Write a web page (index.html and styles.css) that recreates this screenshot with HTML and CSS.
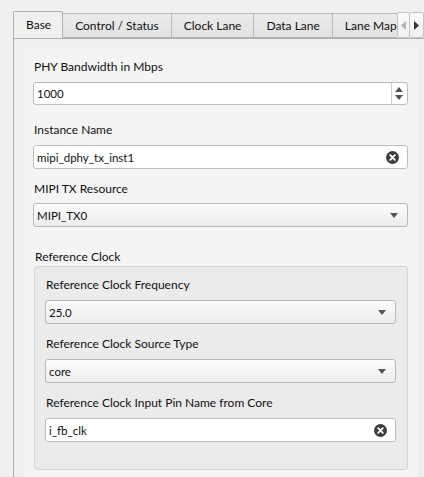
FILE: index.html
```html
<!DOCTYPE html>
<html>
<head>
<meta charset="utf-8">
<link rel="stylesheet" href="styles.css">
</head>
<body>
<div class="tabwidget">
  <div class="tabbar">
    <div class="tabs">
      <div class="tab selected">Base</div>
      <div class="tab">Control / Status</div>
      <div class="tab">Clock Lane</div>
      <div class="tab">Data Lane</div>
      <div class="tab">Lane Mapping</div>
    </div>
    <div class="scrollbtns">
      <div class="sbtn"><svg width="6" height="9" viewBox="0 0 6 9"><path d="M5 0 L0 4.5 L5 9 Z" fill="#b4b4b4"/></svg></div>
      <div class="sbtn"><svg width="6" height="9" viewBox="0 0 6 9"><path d="M0 0 L5 4.5 L0 9 Z" fill="#333"/></svg></div>
    </div>
  </div>
  <div class="pane">
    <div class="scrollarea">
      <div class="field first">
        <div class="label">PHY Bandwidth in Mbps</div>
        <div class="input spin">
          <span class="value">1000</span>
          <span class="spinbtns">
            <svg width="8" height="5" viewBox="0 0 8 5"><path d="M0 5 L4 0 L8 5 Z" fill="#555"/></svg>
            <svg width="8" height="5" viewBox="0 0 8 5"><path d="M0 0 L4 5 L8 0 Z" fill="#555"/></svg>
          </span>
        </div>
      </div>
      <div class="field second">
        <div class="label">Instance Name</div>
        <div class="input">
          <span class="value">mipi_dphy_tx_inst1</span>
          <svg class="clear" width="13" height="13" viewBox="0 0 13 13"><circle cx="6.5" cy="6.5" r="6.5" fill="#3c3c3c"/><path d="M4.2 4.2 L8.8 8.8 M8.8 4.2 L4.2 8.8" stroke="#fff" stroke-width="1.9" stroke-linecap="round"/></svg>
        </div>
      </div>
      <div class="field">
        <div class="label">MIPI TX Resource</div>
        <div class="combo">
          <span class="value">MIPI_TX0</span>
          <svg class="arrow" width="8" height="5" viewBox="0 0 8 5"><path d="M0 0 L8 0 L4 5 Z" fill="#555"/></svg>
        </div>
      </div>
      <div class="groupwrap">
        <div class="label grouptitle">Reference Clock</div>
        <div class="group">
          <div class="field">
            <div class="label">Reference Clock Frequency</div>
            <div class="combo">
              <span class="value">25.0</span>
              <svg class="arrow" width="8" height="5" viewBox="0 0 8 5"><path d="M0 0 L8 0 L4 5 Z" fill="#555"/></svg>
            </div>
          </div>
          <div class="field">
            <div class="label">Reference Clock Source Type</div>
            <div class="combo">
              <span class="value">core</span>
              <svg class="arrow" width="8" height="5" viewBox="0 0 8 5"><path d="M0 0 L8 0 L4 5 Z" fill="#555"/></svg>
            </div>
          </div>
          <div class="field">
            <div class="label">Reference Clock Input Pin Name from Core</div>
            <div class="input">
              <span class="value">i_fb_clk</span>
              <svg class="clear" width="13" height="13" viewBox="0 0 13 13"><circle cx="6.5" cy="6.5" r="6.5" fill="#3c3c3c"/><path d="M4.2 4.2 L8.8 8.8 M8.8 4.2 L4.2 8.8" stroke="#fff" stroke-width="1.9" stroke-linecap="round"/></svg>
            </div>
          </div>
        </div>
      </div>
    </div>
  </div>
</div>
</body>
</html>
```

FILE: styles.css
```css
html, body {
  margin: 0;
  padding: 0;
  background: #f0f0f0;
  overflow: hidden;
  height: 477px;
}
body {
  font-family: Lato, "Noto Sans", sans-serif;
  font-size: 12px;
  color: #111;
}
.tabwidget {
  padding: 11px 0 0 13px;
}
.tabbar {
  display: flex;
  height: 27px;
  position: relative;
  z-index: 1;
}
.tabs {
  display: flex;
  flex: 1;
  overflow: hidden;
  align-items: flex-end;
}
.tab {
  flex: none;
  height: 25px;
  box-sizing: border-box;
  padding: 0 12px;
  display: flex;
  align-items: center;
  background: linear-gradient(#ebebeb, #e2e2e2);
  border: 1px solid #b9b9b9;
  border-left: none;
  border-bottom: 1px solid #b0b0b0;
  font-size: 12px;
}
.tab.selected {
  height: 28px;
  margin-bottom: -1px;
  background: #f0f0f0;
  border-left: 1px solid #b0b0b0;
  border-color: #b0b0b0;
  border-bottom: none;
  border-radius: 2px 2px 0 0;
  padding: 0 11px 2px 12px;
}
.scrollbtns {
  display: flex;
  flex: none;
  height: 26px;
  margin-top: 1px;
}
.sbtn {
  width: 13px;
  box-sizing: border-box;
  background: linear-gradient(#fbfbfb, #f0f0f0);
  border: 1px solid #c4c4c4;
  border-radius: 2px;
  display: flex;
  align-items: center;
  justify-content: center;
}
.sbtn + .sbtn {
  border-left: none;
  width: 14px;
}
.pane {
  border-top: 1px solid #b0b0b0;
  border-left: 1px solid #b0b0b0;
  padding: 9px 7px 0 10px;
  height: 460px;
  box-sizing: border-box;
}
.scrollarea {
  background: #f4f4f4;
  padding: 11px 9px 0 9px;
  height: 460px;
}
.field {
  display: flex;
  flex-direction: column;
  margin-bottom: 17px;
}
.field.second {
  margin-bottom: 12px;
}
.label {
  line-height: 16px;
  margin-bottom: 7px;
  padding-left: 1px;
}
.field.second + .field .label {
  margin-bottom: 6px;
}
.input, .combo {
  height: 24px;
  box-sizing: border-box;
  border: 1px solid #bdbdbd;
  border-radius: 3px;
  background: #fff;
  display: flex;
  align-items: center;
  padding-left: 3px;
}
.input.spin {
  height: 23px;
}
.value {
  flex: 1;
  font-size: 11.5px;
}
.spinbtns {
  align-self: stretch;
  width: 14px;
  border-left: 1px solid #cfcfcf;
  display: flex;
  flex-direction: column;
  align-items: center;
  justify-content: center;
  gap: 3px;
  padding-right: 1px;
}
.clear {
  margin-right: 8px;
}
.combo {
  background: linear-gradient(#fcfcfc, #ececec);
  border-color: #b8b8b8;
}
.arrow {
  margin-right: 9px;
}
.groupwrap {
  padding-top: 5px;
}
.grouptitle {
  margin-bottom: 1px;
  padding-left: 2px;
}
.group {
  margin-left: 1px;
  background: #ebebeb;
  border: 1px solid #d6d6d6;
  border-radius: 3px;
  padding: 10px 11px 14px 10px;
  height: 204px;
  box-sizing: border-box;
}
.group .field {
  margin-bottom: 12px;
}
```
